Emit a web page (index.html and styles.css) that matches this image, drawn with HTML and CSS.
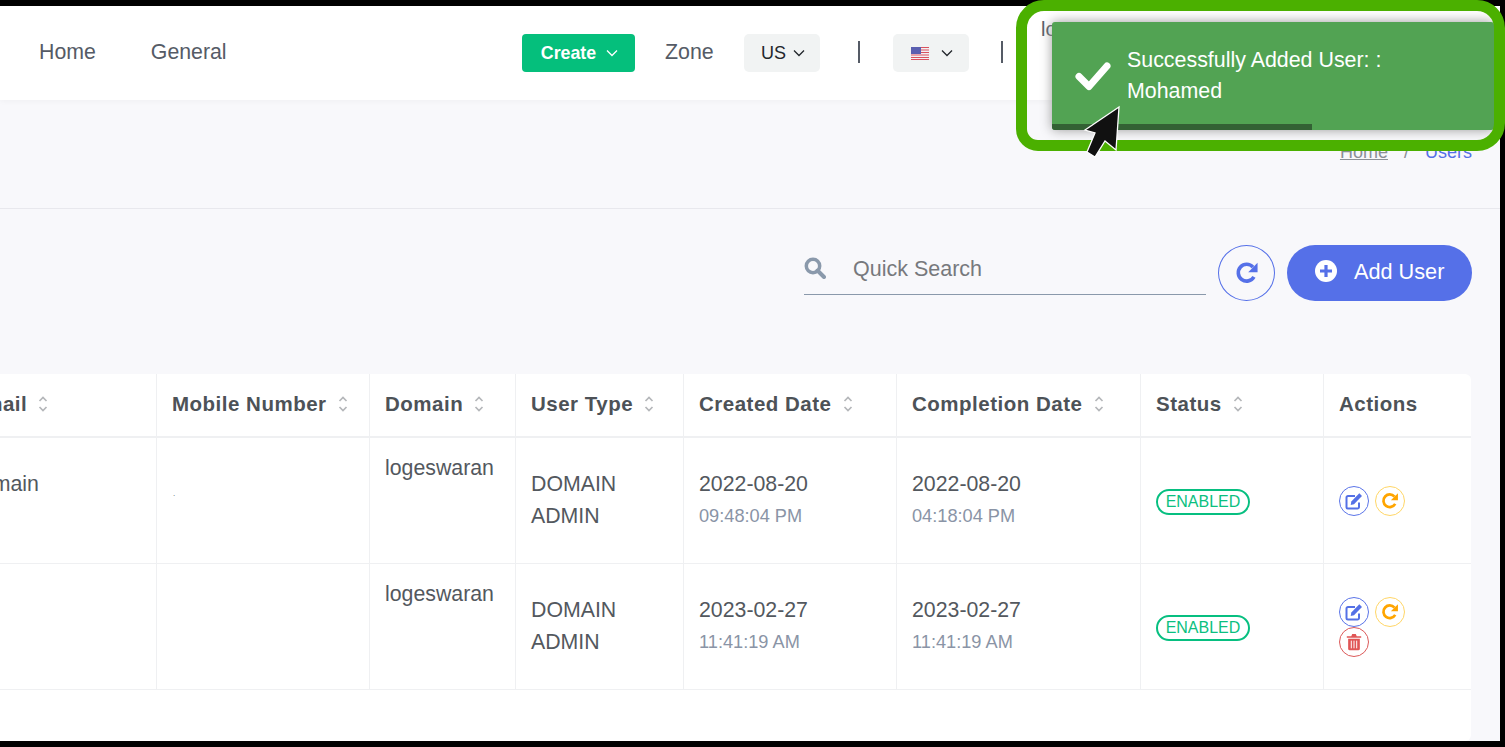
FILE: index.html
```html
<!DOCTYPE html>
<html lang="en">
<head>
    <meta charset="UTF-8">
    <meta name="viewport" content="width=device-width, initial-scale=1.0">
    <title>Users</title>
    <link rel="stylesheet" href="styles.css">
</head>
<body>
    <svg class="icon-defs" width="0" height="0">
        <symbol id="chevron" viewBox="0 0 12 8">
            <path d="M1 1.500 6 6.500 11 1.500" fill="none" stroke="currentColor" stroke-width="1.300"/>
        </symbol>
        <symbol id="sort" viewBox="0 0 10 16">
            <path d="M1.500 5 5 1.500 8.500 5M1.500 11 5 14.500 8.500 11" fill="none" stroke="currentColor" stroke-width="1.700"/>
        </symbol>
        <symbol id="redo" viewBox="0 0 20 20">
            <path d="M15.800 13.200A7 7 0 1 1 15 5.100" fill="none" stroke="currentColor" stroke-width="3"/>
            <path d="M18.800 1.500V9.300H11Z" fill="currentColor"/>
        </symbol>
        <symbol id="edit" viewBox="0 0 18 18">
            <path d="M14 10.500V15a1.500 1.500 0 0 1-1.500 1.500H3A1.500 1.500 0 0 1 1.500 15V5.500A1.500 1.500 0 0 1 3 4H10" fill="none" stroke="currentColor" stroke-width="2"/>
            <path d="M14.300 1.300 17 4 9 12.300 5.700 13 6.300 9.500Z" fill="currentColor"/>
        </symbol>
        <symbol id="trash" viewBox="0 0 18 20">
            <path d="M1 3.500H6L7 1.200H11L12 3.500H17V5.300H1Z" fill="currentColor"/>
            <path d="M2.500 6.300H15.500V17.500A1.800 1.800 0 0 1 13.700 19.300H4.300A1.800 1.800 0 0 1 2.500 17.500Z" fill="currentColor"/>
            <path d="M6 8.500V17M9 8.500V17M12 8.500V17" stroke="#fff" stroke-width="1.100"/>
        </symbol>
    </svg>

    <div class="page">
        <header class="topbar">
            <nav class="main-nav">
                <a href="#">Home</a>
                <a href="#">General</a>
            </nav>
            <div class="topbar-right">
                <button class="btn-create">Create <svg class="chev"><use href="#chevron"/></svg></button>
                <span class="zone-label">Zone</span>
                <button class="btn-select btn-zone">US <svg class="chev"><use href="#chevron"/></svg></button>
                <span class="divider"></span>
                <button class="btn-select btn-lang">
                    <svg class="flag" viewBox="0 0 18 13">
                        <rect width="18" height="13" fill="#f3f0f2"/>
                        <path d="M0 .5H18M0 3H18M0 5.500H18M0 8H18M0 10.500H18M0 12.500H18" stroke="#d9525e" stroke-width="1.200"/>
                        <rect width="10" height="7" fill="#5a5fb0"/>
                    </svg>
                    <svg class="chev"><use href="#chevron"/></svg>
                </button>
                <span class="divider divider-last"></span>
                <span class="user-name">logeswaran</span>
            </div>
        </header>

        <div class="title-bar">
            <div class="breadcrumb">
                <a href="#" class="crumb-home">Home</a>
                <span class="crumb-sep">/</span>
                <span class="crumb-current">Users</span>
            </div>
        </div>

        <div class="toolbar">
            <label class="search">
                <svg class="search-icon" viewBox="0 0 22 22">
                    <circle cx="9" cy="9" r="6.700" fill="none" stroke="currentColor" stroke-width="3.500"/>
                    <path d="M13.500 13.500 20 20" stroke="currentColor" stroke-width="4" stroke-linecap="round"/>
                </svg>
                <input type="text" placeholder="Quick Search">
            </label>
            <button class="btn-refresh"><svg class="refresh-icon"><use href="#redo"/></svg></button>
            <button class="btn-add">
                <svg class="plus-icon" viewBox="0 0 22 22">
                    <circle cx="11" cy="11" r="11" fill="#fff"/>
                    <path d="M11 5V17M5 11H17" stroke="#5570e8" stroke-width="3.200"/>
                </svg>
                Add User
            </button>
        </div>

        <div class="table-card">
            <table class="users-table">
                <colgroup>
                    <col class="col-email">
                    <col class="col-mobile">
                    <col class="col-domain">
                    <col class="col-type">
                    <col class="col-date">
                    <col class="col-done">
                    <col class="col-status">
                    <col class="col-actions">
                </colgroup>
                <thead>
                    <tr>
                        <th class="cell-email">Email <svg class="sort"><use href="#sort"/></svg></th>
                        <th>Mobile Number <svg class="sort"><use href="#sort"/></svg></th>
                        <th>Domain <svg class="sort"><use href="#sort"/></svg></th>
                        <th>User Type <svg class="sort"><use href="#sort"/></svg></th>
                        <th>Created Date <svg class="sort"><use href="#sort"/></svg></th>
                        <th>Completion Date <svg class="sort"><use href="#sort"/></svg></th>
                        <th>Status <svg class="sort"><use href="#sort"/></svg></th>
                        <th>Actions</th>
                    </tr>
                </thead>
                <tbody>
                    <tr>
                        <td class="cell-raised">domain</td>
                        <td><span class="tiny">.</span></td>
                        <td class="cell-top">logeswaran</td>
                        <td>DOMAIN ADMIN</td>
                        <td>2022-08-20<small>09:48:04 PM</small></td>
                        <td>2022-08-20<small>04:18:04 PM</small></td>
                        <td><span class="badge">ENABLED</span></td>
                        <td>
                            <div class="actions">
                                <button class="act act-edit"><svg><use href="#edit"/></svg></button>
                                <button class="act act-redo"><svg><use href="#redo"/></svg></button>
                            </div>
                        </td>
                    </tr>
                    <tr>
                        <td></td>
                        <td></td>
                        <td class="cell-top">logeswaran</td>
                        <td>DOMAIN ADMIN</td>
                        <td>2023-02-27<small>11:41:19 AM</small></td>
                        <td>2023-02-27<small>11:41:19 AM</small></td>
                        <td><span class="badge">ENABLED</span></td>
                        <td>
                            <div class="actions">
                                <button class="act act-edit"><svg><use href="#edit"/></svg></button>
                                <button class="act act-redo"><svg><use href="#redo"/></svg></button>
                                <button class="act act-del"><svg><use href="#trash"/></svg></button>
                            </div>
                        </td>
                    </tr>
                </tbody>
            </table>
        </div>
    </div>

    <div class="toast">
        <svg class="toast-check" viewBox="0 0 36 30">
            <path d="M4 15.500 14 25.500 32 5" fill="none" stroke="#fff" stroke-width="7" stroke-linejoin="round" stroke-linecap="round"/>
        </svg>
        <div class="toast-msg">Successfully Added User: :<br>Mohamed</div>
        <div class="toast-progress"></div>
    </div>

    <div class="highlight"></div>
    <svg class="pointer" viewBox="0 0 40 56">
        <path d="M36 2 2 25 12 28 4 47 12 52 22 36 33 45Z" fill="#111" stroke="#fff" stroke-width="1.300"/>
    </svg>
</body>
</html>
```

FILE: styles.css
```css
* {
    box-sizing: border-box;
}

body {
    margin: 0;
    padding-top: 6px;
    width: 1505px;
    height: 747px;
    overflow: hidden;
    position: relative;
    background-color: #000;
    font-family: "Liberation Sans", Arial, sans-serif;
    color: #53585e;
}

button {
    font-family: inherit;
    border: none;
    cursor: pointer;
}

a {
    text-decoration: none;
}

.icon-defs {
    position: absolute;
}

.page {
    width: 1500px;
    height: 735px;
    background-color: #f8f8fb;
    overflow: hidden;
}

/* top bar */
.topbar {
    height: 94px;
    background-color: #fff;
    box-shadow: 0 1px 6px rgba(0, 0, 0, 0.04);
    display: flex;
    align-items: center;
    position: relative;
    padding-bottom: 2px;
}

.main-nav {
    display: flex;
    gap: 55px;
    padding-left: 39px;
}

.main-nav a {
    font-size: 21.300px;
    color: #555b66;
}

.topbar-right {
    margin-left: auto;
    margin-top: 2px;
    width: 978px;
    display: flex;
    align-items: center;
    white-space: nowrap;
}

.btn-create {
    width: 113px;
    height: 38px;
    background-color: #05bf7c;
    color: #fff;
    font-size: 17.800px;
    font-weight: bold;
    border-radius: 4px;
    display: flex;
    align-items: center;
    justify-content: center;
    gap: 10px;
    padding: 0 0 0 2px;
}

.chev {
    width: 12px;
    height: 8px;
}

.zone-label {
    font-size: 21.400px;
    color: #555b66;
    margin: 0 0 2px 30px;
    width: 79px;
}

.btn-select {
    width: 76px;
    height: 38px;
    background-color: #f1f3f3;
    color: #22262b;
    border-radius: 5px;
    font-size: 18px;
    display: flex;
    align-items: center;
    justify-content: center;
    gap: 7px;
    padding: 0 0 0 2px;
}

.btn-lang {
    gap: 12px;
}

.flag {
    width: 18px;
    height: 13px;
}

.divider {
    width: 2px;
    height: 22px;
    background-color: #555b66;
    margin: 0 33px 2px 38px;
}

.divider-last {
    margin: 0 38px 2px 32px;
}

.user-name {
    font-size: 20px;
    color: #555b66;
    position: relative;
    top: -24px;
}

/* title row */
.title-bar {
    height: 109px;
    border-bottom: 1px solid #e8e8ed;
    display: flex;
    justify-content: flex-end;
    align-items: center;
    padding: 0 28px 3px 0;
}

.breadcrumb {
    display: flex;
    align-items: center;
    gap: 16px;
    font-size: 18px;
}

.crumb-home {
    color: #8b8f96;
    text-decoration: underline;
}

.crumb-sep {
    color: #8b8f96;
}

.crumb-current {
    color: #5470e6;
}

/* search and add */
.toolbar {
    height: 165px;
    padding: 36px 28px 0 0;
    display: flex;
    justify-content: flex-end;
    align-items: flex-start;
}

.search {
    width: 402px;
    height: 50px;
    border-bottom: 1px solid #8a99ab;
    display: flex;
    align-items: center;
    margin-right: 12px;
    padding-bottom: 3px;
}

.search-icon {
    width: 22px;
    height: 22px;
    color: #8a99ab;
    margin-right: 27px;
}

.search input {
    flex: 1;
    border: none;
    background: none;
    outline: none;
    font-family: inherit;
    font-size: 21.500px;
    padding: 2px 0 0;
}

.search input::placeholder {
    color: #77797d;
    opacity: 1;
}

.btn-refresh {
    width: 57px;
    height: 56px;
    border-radius: 50%;
    border: 1px solid #5570e8;
    background: none;
    color: #5570e8;
    margin-right: 12px;
    display: flex;
    align-items: center;
    justify-content: center;
    padding: 0;
}

.refresh-icon {
    width: 24px;
    height: 24px;
}

.btn-add {
    width: 185px;
    height: 56px;
    border-radius: 28px;
    background-color: #5570e8;
    color: #fff;
    font-size: 21.700px;
    display: flex;
    align-items: center;
    gap: 17px;
    padding: 0 0 2px 28px;
}

.plus-icon {
    width: 22px;
    height: 22px;
    position: relative;
    top: -1px;
}

/* table */
.table-card {
    width: 1511px;
    height: 367px;
    margin-left: -40px;
    background-color: #fff;
    border-radius: 0 6px 6px 0;
    overflow: hidden;
}

.users-table {
    width: 100%;
    table-layout: fixed;
    border-collapse: separate;
    border-spacing: 0;
}

.col-email { width: 197px; }
.col-mobile { width: 213px; }
.col-domain { width: 146px; }
.col-type { width: 168px; }
.col-date { width: 213px; }
.col-done { width: 244px; }
.col-status { width: 183px; }
.col-actions { width: 147px; }

.users-table th,
.users-table td {
    padding: 0 15px;
    text-align: left;
    border-right: 1px solid #eff0f2;
}

.users-table th:last-child,
.users-table td:last-child {
    border-right: none;
}

.users-table th {
    height: 64px;
    font-size: 20.500px;
    letter-spacing: 0.5px;
    color: #4d5257;
    white-space: nowrap;
    border-bottom: 2px solid #eff0f2;
    padding-bottom: 2px;
}

.users-table td {
    height: 126px;
    font-size: 21.300px;
    line-height: 32px;
    border-bottom: 1px solid #eff0f2;
    padding-bottom: 2px;
}

.users-table td.cell-top {
    vertical-align: top;
    padding-top: 14px;
}

.users-table .cell-email {
    padding-left: 10px;
}

.users-table td.cell-raised {
    padding: 0 0 34px 9px;
}

.users-table small {
    display: block;
    font-size: 18.200px;
    color: #8a94a6;
}

.tiny {
    font-size: 8px;
    line-height: 8px;
    display: block;
    position: relative;
    left: 1px;
    top: -6px;
}

.sort {
    width: 10px;
    height: 16px;
    color: #b5b7ba;
    margin-left: 5px;
    position: relative;
    top: 1px;
}

.badge {
    display: inline-block;
    width: 94px;
    height: 26px;
    border: 2px solid #07bf80;
    border-radius: 13px;
    color: #0bbf80;
    font-size: 16px;
    line-height: 22px;
    text-align: center;
}

.actions {
    width: 70px;
    display: flex;
    flex-wrap: wrap;
    column-gap: 6px;
    row-gap: 0;
    position: relative;
    top: 1px;
}

.act {
    width: 30px;
    height: 30px;
    border-radius: 50%;
    background: none;
    padding: 0;
    border-width: 1.500px;
    border-style: solid;
    display: flex;
    align-items: center;
    justify-content: center;
}

.act svg {
    width: 18px;
    height: 18px;
}

.act-edit {
    border-color: #5b74e8;
    color: #5470e6;
}

.act-redo {
    border-color: #ffd666;
    color: #ffa500;
}

.act-del {
    border-color: #dc5a5a;
    color: #e05555;
}

/* toast and annotation over the page */
.toast {
    position: absolute;
    top: 22px;
    left: 1052px;
    width: 442px;
    height: 108px;
    background-color: #52a353;
    border-radius: 3px;
    box-shadow: 0 0 12px #999;
    color: #fff;
    overflow: hidden;
}

.toast-check {
    position: absolute;
    left: 23px;
    top: 39px;
    width: 36px;
    height: 30px;
}

.toast-msg {
    position: absolute;
    left: 75px;
    top: 23px;
    font-size: 21.400px;
    line-height: 31px;
}

.toast-progress {
    position: absolute;
    left: 0;
    bottom: 0;
    width: 260px;
    height: 6px;
    background-color: #336134;
}

.highlight {
    position: absolute;
    top: 0;
    left: 1016px;
    width: 489px;
    height: 151px;
    border: 11px solid #4bb000;
    border-radius: 28px 28px 28px 22px;
}

.pointer {
    position: absolute;
    left: 1083px;
    top: 105px;
    width: 40px;
    height: 56px;
}
```
